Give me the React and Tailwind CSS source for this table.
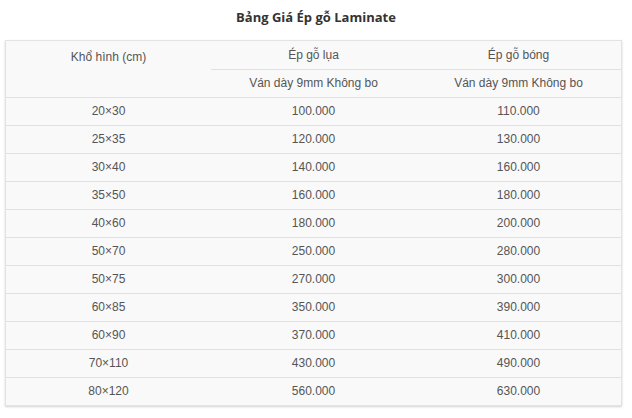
const subRows = [
  ['20×30', '100.000', '110.000'],
  ['25×35', '120.000', '130.000'],
  ['30×40', '140.000', '160.000'],
  ['35×50', '160.000', '180.000'],
  ['40×60', '180.000', '200.000'],
  ['50×70', '250.000', '280.000'],
  ['50×75', '270.000', '300.000'],
  ['60×85', '350.000', '390.000'],
  ['60×90', '370.000', '410.000'],
  ['70×110', '430.000', '490.000'],
  ['80×120', '560.000', '630.000'],
];

export default function App() {
  return (
    <div className="w-[632px] h-[418px] bg-white font-['Liberation_Sans',Arial,sans-serif]">
      <h2 className="pt-[9px] h-[40px] text-center text-[13px] leading-[16px] font-bold text-[#333] font-['Open_Sans',sans-serif]">
        Bảng Giá Ép gỗ Laminate
      </h2>

      <div className="mx-[5px] w-[617px] border border-[#e3e3e3] bg-[#f9f9f9] shadow-[0_1px_2px_rgba(0,0,0,0.18)]">
        <table className="w-full table-fixed border-collapse text-[12px] text-[#555]">
          <thead>
            <tr className="h-[28px]">
              <th rowSpan={2} className="align-top pt-[7px] font-normal text-center border-b border-[#e0e0e0]">
                Khổ hình (cm)
              </th>
              <th className="font-normal text-center border-b border-[#e0e0e0]">Ép gỗ lụa</th>
              <th className="font-normal text-center border-b border-[#e0e0e0]">Ép gỗ bóng</th>
            </tr>
            <tr className="h-[28px]">
              <th className="font-normal text-center border-b border-[#e0e0e0]">Ván dày 9mm Không bo</th>
              <th className="font-normal text-center border-b border-[#e0e0e0]">Ván dày 9mm Không bo</th>
            </tr>
          </thead>
          <tbody>
            {subRows.map((r, i) => (
              <tr key={r[0]} className={`h-[28px] ${i < subRows.length - 1 ? 'border-b border-[#e0e0e0]' : ''}`}>
                <td className="text-center">{r[0]}</td>
                <td className="text-center">{r[1]}</td>
                <td className="text-center">{r[2]}</td>
              </tr>
            ))}
          </tbody>
        </table>
      </div>
    </div>
  );
}
